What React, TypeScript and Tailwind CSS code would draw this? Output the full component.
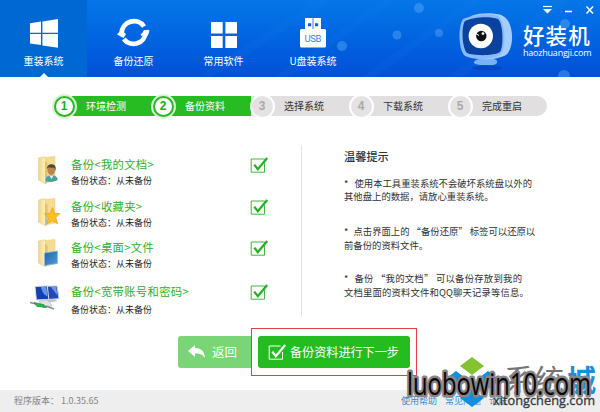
import type { ReactNode } from 'react';

const navItems = [
  { label: '重装系统', icon: <WindowsIcon />, width: 'w-[87px] bg-[#0068d2]', active: true },
  { label: '备份还原', icon: <RestoreIcon />, width: 'w-[93px]' },
  { label: '常用软件', icon: <AppsIcon />, width: 'w-[87px]' },
  { label: 'U盘装系统', icon: <UsbIcon />, width: 'w-[92px]' },
];

const steps = ['环境检测', '备份资料', '选择系统', '下载系统', '完成重启'];

const backups = [
  { title: '备份<我的文档>', icon: <FolderIcon kind="user" />, row: 'h-[42px]', status: 'mt-[3px]' },
  { title: '备份<收藏夹>', icon: <FolderIcon kind="star" />, row: 'h-[41px]', status: 'mt-[3px]' },
  { title: '备份<桌面>文件', icon: <FolderIcon kind="desktop" />, row: 'h-[44px]', status: 'mt-[3px]' },
  { title: '备份<宽带账号和密码>', icon: <NetworkIcon />, row: 'h-[42px]', status: 'mt-[5px]' },
];

function WindowsIcon() {
  return (
    <svg width="28" height="29" viewBox="0 0 28 29" fill="white">
      <path d="M0 4.2 11 2.6V13.7H0zM12.4 2.4 28 0V13.7H12.4zM0 15H11V26L0 24.5zM12.4 15H28V28.8L12.4 26.4z" />
    </svg>
  );
}

function RestoreIcon() {
  return (
    <svg width="33" height="31" viewBox="0 0 33 31" fill="none">
      <path d="M4.7 16A12.2 12.2 0 0 1 27 9.5" stroke="white" strokeWidth="4.8" />
      <path d="M28.7 15A12.2 12.2 0 0 1 6.8 22" stroke="white" strokeWidth="4.8" />
      <path d="M0 17.5 4 13 9 17 6.5 21z" fill="white" />
      <path d="M32.5 13.5 31 18.5 24 18.5 27 13z" fill="white" />
      <path d="m24 18 7.5-4.8" stroke="white" strokeWidth="1.5" />
    </svg>
  );
}

function AppsIcon() {
  return (
    <svg width="26" height="26" viewBox="0 0 26 26" fill="white">
      <path d="M.5 0h10.7a.5.5 0 0 1 .5.5v11H0V.5zM14.5 0h11a.5.5 0 0 1 .5.5v11H14.3zM0 14h11.7v12H.5L0 25.5zM14.3 14H26v11.5l-.5.5H14.3z" />
    </svg>
  );
}

function UsbIcon() {
  return (
    <svg width="26" height="30" viewBox="0 0 26 30">
      <path d="M5 0h16v11h4l1 1v16.5l-1 1H1l-1-1V12l1-1h4z" fill="white" />
      <path d="M8 5.2h3.2v3H8zM15 5.2h3.2v3H15zM12.6 0h.8v11h-.8z" fill="#1161c9" />
      <text x="13" y="24.3" textAnchor="middle" fontSize="9.5" fontFamily="Roboto, sans-serif" fill="#3486df" textLength="17">USB</text>
    </svg>
  );
}

function FolderIcon({ kind }: { kind: 'user' | 'star' | 'desktop' }) {
  return (
    <svg width="24" height="29" viewBox="0 0 24 29">
      <defs>
        <linearGradient id={`folder-${kind}`} x1="0" x2="1">
          <stop offset="0" stopColor="#eed78b" />
          <stop offset="1" stopColor="#fff3bf" />
        </linearGradient>
        <linearGradient id={`screen-${kind}`} x1="0" y1="0" x2="1" y2="1">
          <stop offset="0" stopColor="#2065a8" />
          <stop offset="1" stopColor="#4b9ddd" />
        </linearGradient>
      </defs>
      <path d="M7 1.5 17 .5V25L7 27z" fill="#f4dd91" stroke="#e2c779" strokeWidth=".5" />
      <path d="M.5 2 6.5.7 8 4v24L.5 24z" fill={`url(#folder-${kind})`} stroke="#dec274" strokeWidth=".5" />
      <path d="M7 4.5 9.5 7v17L7 28z" fill="#e2c16d" />
      <path d="M8 20 8.5 27" stroke="#8bc4e8" strokeWidth="1" />
      {kind === 'user' && (
        <>
          <path d="M7.5 25c0-4 2.8-6 6.3-6 3.6 0 5.9 2.4 5.9 5.1-3 2-9.5 2.4-12.2.9z" fill="#4ba29b" />
          <path d="m11 19.5 2.7 3.5 2-3.8z" fill="#d9eee4" />
          <ellipse cx="13.3" cy="14.3" rx="3.8" ry="4.8" fill="#bb8650" />
          <path d="M9 13c-.2-3.5 2-5 5-4.7 2.8.2 4.5 2.3 3.4 6.5l-1.2-3.1-5.7-.2z" fill="#534534" />
        </>
      )}
      {kind === 'star' && (
        <path d="m14.5 9.5 1.8 5.9 5.8.2-4.4 4 2 6.2-5.4-3-5.5 3.2 1.7-6.2-4.2-4 5.8-.6z" fill="#ffbd25" stroke="#eb9d23" strokeWidth=".7" />
      )}
      {kind === 'desktop' && (
        <path d="M6.5 14 19.5 12v12.5l-13 2z" fill="url(#screen-desktop)" stroke="#82bce6" strokeWidth=".7" />
      )}
    </svg>
  );
}

function NetworkIcon() {
  return (
    <svg width="32" height="28" viewBox="0 0 32 28">
      <path d="m15 14 8-1 4 4-9 2z" fill="#bdc7ce" />
      <path d="M15 2.2 27 2l2 12.7-11.5.8z" fill="#2846b4" stroke="#c9d6df" />
      <path d="m21 3 5-.2 1.5 8.8z" fill="#7199e2" />
      <path d="M5 2.4 17.3 2l1.5 13.3L6.4 16z" fill="#143fb0" stroke="#d5dde2" />
      <path d="m11 3 5.2-.2 1.4 9.7C14 11 11.7 7.3 11 3z" fill="#6795e6" />
      <path d="m9 17 9-1 4 6-9 1.5z" fill="#dfe3e5" stroke="#aab2b5" strokeWidth=".6" />
      <path d="m0 18.5 6 1.5M16 22l8 3" stroke="#858e8e" strokeWidth="1.4" />
      <path d="M4 18.5 14 20.7 16.5 23.5 7 22.4z" fill="#29b64a" stroke="#17863b" strokeWidth=".7" />
    </svg>
  );
}

function CheckBox({ light = false }: { light?: boolean }) {
  const color = light ? 'white' : '#27af29';
  return (
    <svg width="19" height="18" viewBox="0 0 19 18" fill="none" className="shrink-0">
      <path d="M14.5 9v7.2H1.2V3H12.5" stroke={color} strokeWidth={light ? 1 : 0.9} />
      {!light && <path d="M12 3h2.5v7" stroke={color} strokeWidth=".8" />}
      <path d="m4.3 8.6 3.5 4.6L17.2 2" stroke={color} strokeWidth="2.3" />
    </svg>
  );
}

function Logo() {
  return (
    <svg width="58" height="60" viewBox="0 0 58 60">
      <ellipse cx="29" cy="56" rx="15" ry="2.3" fill="#073caa" opacity=".5" />
      <path d="m20 44 15-1 1 4c4 1 5 5-1 6H22c-8-1-8-4-1-6z" fill="#76b1fa" />
      <path d="M13 4C24 0 40 1 45 4c11 5 12 32 3 39-7 4-22 6-31 3z" fill="#a3ccff" />
      <path d="M5 7C14 3 32 1 40 4c7 4 9 32 2 39-8 5-27 5-35 1C0 38 0 14 5 7z" fill="#86baff" />
      <path d="M7 9c8-4 25-5 33-2 5 4 6 27 2 33-6 4-26 4-33 1C4 36 3 15 7 9z" fill="#0b429f" />
      <circle cx="22.8" cy="24" r="12.2" fill="white" />
      <circle cx="23.3" cy="24" r="5.2" fill="#101010" />
      <circle cx="25" cy="21.6" r="1.4" fill="white" />
      <path d="m18 21.5 3 2" stroke="white" strokeWidth="1" />
    </svg>
  );
}

function Header() {
  return (
    <header className="relative flex h-[77px] bg-gradient-to-b from-[#0676e8] to-[#0450d8] text-white">
      <svg className="absolute inset-0" width="600" height="77">
        <g stroke="#278df1" strokeWidth="8" opacity=".08">
          <path d="m200 80 140-90M270 85 410-15M350 90 490-10M430 95 570-5" />
        </g>
        <g fill="#64b3ff" opacity=".4">
          <circle cx="342" cy="46" r="5" />
          <circle cx="397" cy="35" r="4.5" />
          <circle cx="419" cy="8" r="5" />
          <circle cx="439" cy="33" r="4" />
          <circle cx="564" cy="76" r="6" />
          <circle cx="565" cy="24" r="5" />
        </g>
      </svg>
      <nav className="relative flex">
        {navItems.map(({ label, icon, width, active }) => (
          <NavTab key={label} label={label} width={width} active={active}>{icon}</NavTab>
        ))}
      </nav>
      <div className="relative ml-auto flex w-[142px]">
        <div className="mt-[12px]"><Logo /></div>
        <div className="ml-[7px] flex flex-col pt-[22px]">
          <span className="h-[25px] whitespace-nowrap text-[21.5px] font-medium leading-[25px] tracking-[1.1px]">好装机</span>
          <span className="h-[13px] font-['Open_Sans',sans-serif] text-[9px] leading-[12px] tracking-[-0.22px]">haozhuangji.com</span>
        </div>
      </div>
      <svg className="absolute right-0 top-0" width="60" height="18" fill="none" stroke="white">
        <path d="M3 6.5h9" strokeWidth="1.2" />
        <path d="M3 9h9l-4.5 4.5z" fill="white" stroke="none" />
        <path d="M25 11.5h7M46.5 6.5l6.5 7m0-7-6.5 7" strokeWidth="1.5" />
      </svg>
    </header>
  );
}

function NavTab({ label, width, active, children }: { label: string; width: string; active?: boolean; children: ReactNode }) {
  return (
    <button className={`relative flex flex-col items-center ${width}`}>
      <span className="flex h-[53px] items-end justify-center pb-[5px]">{children}</span>
      <span className="whitespace-nowrap text-[10px] leading-4">{label}</span>
      {active && (
        <svg className="absolute bottom-0" width="8" height="4"><path d="m0 4 4-4 4 4z" fill="white" /></svg>
      )}
    </button>
  );
}

function Steps() {
  return (
    <div className="mx-[53px] mt-[19px] flex h-5">
      {steps.map((label, index) => {
        const done = index < 2;
        return (
          <div
            key={label}
            className={`flex h-5 items-center ${done ? 'bg-[#27bd22] text-white' : 'bg-[#e1dfe0] text-[#343434]'} ${index === 0 ? 'rounded-l-full' : ''} ${index === 4 ? 'w-[98px] rounded-r-full' : 'w-[99px]'}`}
          >
            <span className={`-ml-[1.5px] flex size-[25px] shrink-0 items-center justify-center rounded-full ${done ? 'bg-[#d6f4d4]' : 'bg-white'}`}>
              <span className={`flex size-[21px] items-center justify-center rounded-full font-['Liberation_Sans',sans-serif] text-[12px] font-bold leading-none ${done ? 'border-[2.5px] border-[#27b922] bg-white text-[#27a922]' : 'bg-[#e4e2e3] text-[#aaa]'}`}>
                {index + 1}
              </span>
            </span>
            <span className="ml-[9.5px] whitespace-nowrap text-[10px] leading-5">{label}</span>
          </div>
        );
      })}
    </div>
  );
}

function BackupList() {
  return (
    <section className="w-[301px] pl-[30px] pt-[20px]">
      {backups.map(({ title, icon, row, status }) => (
        <div key={title} className={`flex ${row}`}>
          <div className={`flex w-[41px] items-start ${title.includes('宽带') ? 'pt-[1px]' : 'pl-[8px]'}`}>{icon}</div>
          <div className="w-[179px] whitespace-nowrap pt-[1px]">
            <div className="h-[15px] text-[11.3px] leading-[15px] tracking-[0.35px] text-[#2fae2b]">{title}</div>
            <div className={`${status} h-3 text-[9px] leading-3 text-[#202020]`}>备份状态：从未备份</div>
          </div>
          <CheckBox />
        </div>
      ))}
    </section>
  );
}

function Tips() {
  return (
    <section className="mt-[9px] h-[172px] w-[249px] whitespace-nowrap border-l border-[#e3e3e3] pl-[42px] pt-[3px] text-[9.35px] text-[#303030]">
      <h2 className="h-4 text-[11.2px] font-medium leading-4">温馨提示</h2>
      <p className="mt-[13px] leading-[13px]">* <span className="ml-[4px]">使用本工具重装系统不会破坏系统盘以外的</span><br />其他盘上的数据，请放心重装系统。</p>
      <p className="mt-[21px] leading-[14px]">* <span className="ml-[3px]">点击界面上的 “备份还原” 标签可以还原以</span><br />前备份的资料文件。</p>
      <p className="mt-[19px] leading-[14px]">* <span className="ml-[4px] tracking-[0.25px]">备份 “我的文档” 可以备份存放到我的</span><br /><span className="tracking-[0.15px]">文档里面的资料文件和QQ聊天记录等信息。</span></p>
    </section>
  );
}

function Actions() {
  return (
    <div className="flex h-[48px] items-center pl-[178px]">
      <button className="flex h-8 w-[73px] items-center rounded-l-[3px] bg-[#79d575] pl-[10px] text-white">
        <svg width="17" height="14" viewBox="0 0 17 14">
          <path d="M7 0v3.1c6 0 9.5 3.3 10 9.9-2.8-4-5.5-4.6-10-4.5V12L0 6z" fill="white" />
        </svg>
        <span className="ml-[7px] text-[12.5px] leading-4">返回</span>
      </button>
      <div className="flex h-[48px] w-[166px] items-center justify-center border-[1.5px] border-[#e83a42] bg-white">
        <button className="flex h-8 w-[152px] items-center rounded-[3px] bg-[#25bc20] pl-[10px] text-white">
          <CheckBox light />
          <span className="ml-[3px] whitespace-nowrap text-[12.1px] leading-4">备份资料进行下一步</span>
        </button>
      </div>
    </div>
  );
}

function Watermark() {
  return (
    <svg className="absolute bottom-0 right-0" width="200" height="58" viewBox="400 354 200 58">
      <path d="m472 357 12 9-12 9-12-9z" fill="#83c332" />
      <path d="m456 371 12 9-12 9-12-9zM488 371l12 9-12 9-12-9zM472 389l12 9-12 9-12-9z" fill="#138fdd" />
      <g fontFamily="Noto Sans CJK SC, sans-serif" fontSize="30">
        <text x="504" y="391" fill="#747477" textLength="60">系统</text>
        <text x="567" y="391" fill="#178fdc" fontWeight="bold" textLength="29" lengthAdjust="spacingAndGlyphs">城</text>
      </g>
      <text x="493" y="405" fontFamily="Open Sans, sans-serif" fontSize="13" fill="#33373b" stroke="#33373b" strokeWidth=".3" textLength="102" lengthAdjust="spacingAndGlyphs">xitongcheng.com</text>
      <text
        x="407"
        y="395"
        fontFamily="Open Sans, sans-serif"
        fontSize="31"
        fill="#050505"
        stroke="#888384"
        strokeWidth="5"
        strokeLinejoin="round"
        paintOrder="stroke"
        textLength="184"
        lengthAdjust="spacingAndGlyphs"
      >
        luobowin10.com
      </text>
    </svg>
  );
}

export default function App() {
  return (
    <div className="relative flex h-[412px] w-[600px] flex-col overflow-hidden bg-white font-['Noto_Sans_CJK_SC',sans-serif]">
      <Header />
      <Steps />
      <main className="flex h-[212px] pt-[20px]">
        <BackupList />
        <Tips />
      </main>
      <Actions />
      <footer className="mt-auto flex h-[22px] items-center bg-[#eeeeee] pl-[14px] text-[9px] text-[#858585]">
        <span className="w-[387px] whitespace-nowrap">程序版本： 1.0.35.65</span>
        <nav className="flex gap-[8px] whitespace-nowrap text-[#3987d2]">
          <a>使用帮助</a>
          <a>常见问题</a>
          <a>论坛</a>
        </nav>
      </footer>
      <Watermark />
    </div>
  );
}
